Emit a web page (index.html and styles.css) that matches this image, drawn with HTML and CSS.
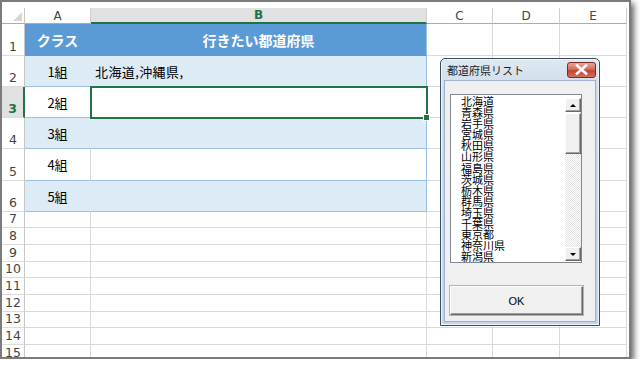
FILE: index.html
```html
<!DOCTYPE html>
<html lang="ja">
<head>
<meta charset="utf-8">
<title>都道府県リスト</title>
<link rel="stylesheet" href="styles.css">
</head>
<body>
<div class="frame">
  <div class="sheet">
    <div class="row h-hdr">
      <div class="c rn corner"><span class="tri"></span></div>
      <div class="c ca ch">A</div>
      <div class="c cb ch ch-sel">B</div>
      <div class="c cc ch">C</div>
      <div class="c cd ch">D</div>
      <div class="c ce ch">E</div>
    </div>
    <div class="row h32">
      <div class="c rn">1</div>
      <div class="c ca th">クラス</div>
      <div class="c cb th">行きたい都道府県</div>
      <div class="c cc"></div><div class="c cd"></div><div class="c ce"></div>
    </div>
    <div class="row h31">
      <div class="c rn">2</div>
      <div class="c ca band">1組</div>
      <div class="c cb band left">北海道,沖縄県,</div>
      <div class="c cc"></div><div class="c cd"></div><div class="c ce"></div>
    </div>
    <div class="row h31">
      <div class="c rn rn-sel">3</div>
      <div class="c ca plain">2組</div>
      <div class="c cb plain cur"></div>
      <div class="c cc"></div><div class="c cd"></div><div class="c ce"></div>
    </div>
    <div class="row h31">
      <div class="c rn">4</div>
      <div class="c ca band">3組</div>
      <div class="c cb band"></div>
      <div class="c cc"></div><div class="c cd"></div><div class="c ce"></div>
    </div>
    <div class="row h32">
      <div class="c rn">5</div>
      <div class="c ca plain">4組</div>
      <div class="c cb plain"></div>
      <div class="c cc"></div><div class="c cd"></div><div class="c ce"></div>
    </div>
    <div class="row h31">
      <div class="c rn">6</div>
      <div class="c ca band">5組</div>
      <div class="c cb band"></div>
      <div class="c cc"></div><div class="c cd"></div><div class="c ce"></div>
    </div>
    <div class="row h16"><div class="c rn">7</div><div class="c ca"></div><div class="c cb"></div><div class="c cc"></div><div class="c cd"></div><div class="c ce"></div></div>
    <div class="row h17"><div class="c rn">8</div><div class="c ca"></div><div class="c cb"></div><div class="c cc"></div><div class="c cd"></div><div class="c ce"></div></div>
    <div class="row h17"><div class="c rn">9</div><div class="c ca"></div><div class="c cb"></div><div class="c cc"></div><div class="c cd"></div><div class="c ce"></div></div>
    <div class="row h16"><div class="c rn">10</div><div class="c ca"></div><div class="c cb"></div><div class="c cc"></div><div class="c cd"></div><div class="c ce"></div></div>
    <div class="row h17"><div class="c rn">11</div><div class="c ca"></div><div class="c cb"></div><div class="c cc"></div><div class="c cd"></div><div class="c ce"></div></div>
    <div class="row h17"><div class="c rn">12</div><div class="c ca"></div><div class="c cb"></div><div class="c cc"></div><div class="c cd"></div><div class="c ce"></div></div>
    <div class="row h16"><div class="c rn">13</div><div class="c ca"></div><div class="c cb"></div><div class="c cc"></div><div class="c cd"></div><div class="c ce"></div></div>
    <div class="row h17"><div class="c rn">14</div><div class="c ca"></div><div class="c cb"></div><div class="c cc"></div><div class="c cd"></div><div class="c ce"></div></div>
    <div class="row h17"><div class="c rn">15</div><div class="c ca"></div><div class="c cb"></div><div class="c cc"></div><div class="c cd"></div><div class="c ce"></div></div>
  </div>

  <div class="dialog">
    <div class="titlebar">
      <span class="title">都道府県リスト</span>
      <span class="close"><svg width="13" height="11" viewBox="0 0 13 11"><path d="M2 1.5 L11 9.5 M11 1.5 L2 9.5" stroke="#fff" stroke-width="2.6" stroke-linecap="square" fill="none"/></svg></span>
    </div>
    <div class="client">
      <div class="listbox">
        <div class="items">
          <div>北海道</div><div>青森県</div><div>岩手県</div><div>宮城県</div><div>秋田県</div>
          <div>山形県</div><div>福島県</div><div>茨城県</div><div>栃木県</div><div>群馬県</div>
          <div>埼玉県</div><div>千葉県</div><div>東京都</div><div>神奈川県</div><div>新潟県</div>
        </div>
        <div class="vscroll">
          <div class="sbtn"><span class="arr up"></span></div>
          <div class="thumb"></div>
          <div class="track"></div>
          <div class="sbtn"><span class="arr down"></span></div>
        </div>
      </div>
      <div class="okbtn">OK</div>
    </div>
  </div>
</div>
</body>
</html>
```

FILE: styles.css
```css
html, body {
  margin: 0;
  padding: 0;
  background: #ffffff;
}

.frame {
  position: relative;
  width: 631px;
  height: 359px;
  box-sizing: border-box;
  border: 2px solid #7b7b7b;
  background: #ffffff;
  overflow: hidden;
  box-shadow: 3px 3px 6px rgba(0, 0, 0, 0.6);
  padding-top: 6px;
}

.sheet {
  display: flex;
  flex-direction: column;
}

.row {
  display: flex;
  flex: none;
}

.h-hdr { height: 16px; }
.h32 { height: 32px; }
.h31 { height: 31px; }
.h16 { height: 16px; }
.h17 { height: 17px; }

.c {
  box-sizing: border-box;
  flex: none;
  height: 100%;
  border-right: 1px solid #d9d9d9;
  border-bottom: 1px solid #d9d9d9;
  display: flex;
  align-items: center;
  justify-content: center;
  font-family: "Noto Sans CJK JP", "Noto Sans", sans-serif;
  font-size: 13px;
  color: #000;
  white-space: nowrap;
}

.rn {
  width: 23px;
  align-items: flex-end;
  padding-bottom: 1px;
  font-family: "DejaVu Sans", sans-serif;
  font-size: 12.5px;
  line-height: 14px;
  color: #444;
  border-right-color: #c6c6c6;
  border-bottom-color: #dcdcdc;
}

.ca { width: 66px; }
.cb { width: 336px; }
.cc { width: 66px; }
.cd { width: 67px; }
.ce { width: 67px; }

.ch {
  font-family: "DejaVu Sans", sans-serif;
  font-size: 12px;
  color: #444;
  border-bottom-color: #ababab;
  border-right-color: #d0d0d0;
}

.corner {
  justify-content: flex-end;
  align-items: flex-end;
  padding: 0 2px 2px 0;
  border-bottom-color: #ababab;
}

.tri {
  width: 0;
  height: 0;
  border-left: 9px solid transparent;
  border-bottom: 9px solid #d6d6d6;
}

.ch-sel {
  background: #e1e1e1;
  color: #217346;
  font-weight: bold;
  border-bottom: 2px solid #217346;
}

.rn-sel {
  background: #e1e1e1;
  color: #217346;
  font-weight: bold;
  border-right: 2px solid #217346;
}

.th {
  background: #5b9bd5;
  color: #ffffff;
  font-weight: bold;
  font-size: 14px;
  border-bottom-color: #5b9bd5;
  border-right-color: #5b9bd5;
}

.th.cb { border-right-color: #9bc2e6; }

.band {
  background: #ddebf7;
  border-bottom-color: #9bc2e6;
  border-right-color: #ddebf7;
}

.band.cb { border-right-color: #9bc2e6; }

.plain {
  border-bottom-color: #9bc2e6;
}

.plain.cb { border-right-color: #9bc2e6; }

.left {
  justify-content: flex-start;
  padding-left: 4px;
  letter-spacing: 0.4px;
}

.cur {
  position: relative;
  z-index: 1;
  outline: 2px solid #217346;
  outline-offset: -1px;
}

.cur::after {
  content: "";
  position: absolute;
  right: -4px;
  bottom: -4px;
  width: 5px;
  height: 5px;
  background: #217346;
  border: 1px solid #ffffff;
}

/* ---------- dialog ---------- */
.dialog {
  position: absolute;
  left: 438px;
  top: 56px;
  width: 160px;
  height: 268px;
  box-sizing: border-box;
  border: 1px solid #3d4d60;
  border-radius: 5px 5px 0 0;
  background: linear-gradient(#dfe8f2, #cfdcea 30px, #c3d5e8);
  box-shadow: inset 0 0 0 1px #eef4fa;
  padding: 0 3px 3px 3px;
  display: flex;
  flex-direction: column;
  z-index: 2;
}

.titlebar {
  height: 21px;
  flex: none;
  display: flex;
  align-items: center;
  justify-content: space-between;
}

.title {
  font-family: "Noto Sans CJK JP", sans-serif;
  font-size: 11px;
  color: #1b1b1b;
  padding-left: 3px;
  line-height: 12px;
}

.close {
  width: 29px;
  height: 16px;
  box-sizing: border-box;
  border: 1px solid #7a2b22;
  border-radius: 3px;
  background: linear-gradient(#e8a598, #d46c5c 45%, #c14532 55%, #d2705e);
  display: flex;
  align-items: center;
  justify-content: center;
}

.client {
  flex: 1;
  background: #f0f0f0;
  border: 1px solid #9db3cb;
  padding: 13px 0 0 5px;
  display: flex;
  flex-direction: column;
}

.listbox {
  width: 132px;
  height: 169px;
  box-sizing: border-box;
  border: 1px solid #828790;
  background: #ffffff;
  display: flex;
}

.items {
  flex: 1;
  padding: 1px 0 0 10px;
  font-family: "Noto Sans CJK JP", sans-serif;
  font-size: 11px;
  line-height: 11.1px;
  color: #000;
}

.vscroll {
  width: 16px;
  margin: 3px 0 1px 0;
  display: flex;
  flex-direction: column;
}

.sbtn {
  height: 14px;
  box-sizing: border-box;
  background: #f0f0f0;
  border: 1px solid;
  border-color: #ffffff #696969 #696969 #ffffff;
  box-shadow: inset -1px -1px 0 #a0a0a0;
  display: flex;
  align-items: center;
  justify-content: center;
  flex: none;
}

.arr {
  width: 0;
  height: 0;
  border-left: 3px solid transparent;
  border-right: 3px solid transparent;
}

.arr.up { border-bottom: 3px solid #000; }
.arr.down { border-top: 3px solid #000; }

.thumb {
  height: 41px;
  flex: none;
  box-sizing: border-box;
  background: #f0f0f0;
  border: 1px solid;
  border-color: #ffffff #696969 #696969 #ffffff;
  box-shadow: inset -1px -1px 0 #a0a0a0;
  margin-top: 1px;
}

.track {
  flex: 1;
  background: repeating-conic-gradient(#e3e3e3 0 25%, #ffffff 0 50%) 0 0 / 2px 2px;
}

.okbtn {
  margin-top: 23px;
  width: 133px;
  height: 29px;
  box-sizing: border-box;
  background: #f0f0f0;
  border: 1px solid;
  border-color: #ffffff #696969 #696969 #ffffff;
  box-shadow: inset -1px -1px 0 #a0a0a0, 0 0 0 1px #b4b4b4;
  display: flex;
  align-items: center;
  justify-content: center;
  font-family: "Liberation Sans", Arial, sans-serif;
  font-size: 11px;
  color: #000;
}
```
